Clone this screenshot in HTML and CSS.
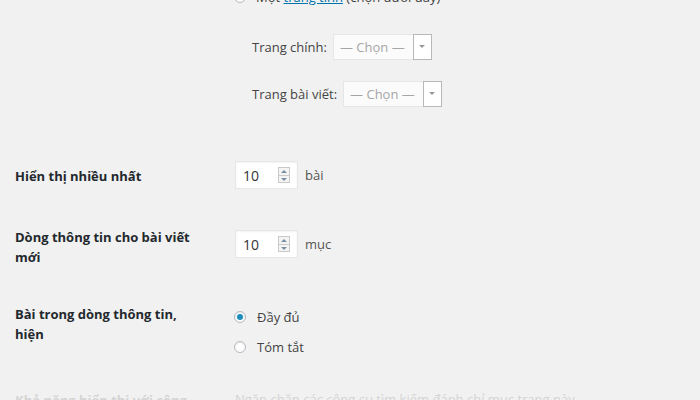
FILE: index.html
```html
<!DOCTYPE html>
<html lang="vi">
<head>
<meta charset="utf-8">
<title>Cài đặt đọc</title>
<link rel="stylesheet" href="styles.css">
</head>
<body>
<div class="page">
  <div class="row row-front">
    <div class="th"></div>
    <div class="td">
      <div class="radio-line top-line"><span class="radio"></span><span>Một <a href="#" class="link">trang tĩnh</a> (chọn dưới đây)</span></div>
      <div class="sub-line first-sub"><span class="sub-label">Trang chính:</span><span class="select"><span class="select-text">— Chọn —</span><span class="select-arrow"></span></span></div>
      <div class="sub-line second-sub"><span class="sub-label">Trang bài viết:</span><span class="select"><span class="select-text">— Chọn —</span><span class="select-arrow"></span></span></div>
    </div>
  </div>

  <div class="row row-b">
    <div class="th th-b">Hiển thị nhiều nhất</div>
    <div class="td td-inline"><span class="num"><span class="num-val">10</span><span class="spin"><span class="up"></span><span class="down"></span></span></span><span class="unit">bài</span></div>
  </div>

  <div class="row row-c">
    <div class="th">Dòng thông tin cho bài viết mới</div>
    <div class="td td-inline td-c"><span class="num"><span class="num-val">10</span><span class="spin"><span class="up"></span><span class="down"></span></span></span><span class="unit">mục</span></div>
  </div>

  <div class="row row-d">
    <div class="th">Bài trong dòng thông tin, hiện</div>
    <div class="td td-d">
      <div class="radio-line"><span class="radio checked"></span><span>Đầy đủ</span></div>
      <div class="radio-line second-radio"><span class="radio"></span><span>Tóm tắt</span></div>
    </div>
  </div>

  <div class="row row-e">
    <div class="th faint">Khả năng hiển thị với công cụ tìm kiếm</div>
    <div class="td faint">Ngăn chặn các công cụ tìm kiếm đánh chỉ mục trang này</div>
  </div>
</div>
</body>
</html>
```

FILE: styles.css
```css
html, body {
  margin: 0;
  padding: 0;
  background: #f1f1f1;
  overflow: hidden;
}
body {
  font-family: "Open Sans", "Noto Sans", sans-serif;
  font-size: 13px;
  color: #444;
  width: 700px;
  height: 400px;
}
.page {
  padding-left: 15px;
}
.row {
  display: flex;
  align-items: flex-start;
}
.th {
  width: 220px;
  flex: none;
  font-weight: 700;
  font-size: 13px;
  line-height: 20px;
  color: #23282d;
  box-sizing: border-box;
  padding-right: 34px;
}
.td {
  flex: 1;
}
.row-front {
  margin-top: -13px;
}
.radio-line {
  display: flex;
  align-items: center;
  height: 20px;
  line-height: 20px;
}
.radio {
  width: 12px;
  height: 12px;
  border: 1px solid #b4b9be;
  border-radius: 50%;
  background: #fff;
  box-shadow: inset 0 1px 2px rgba(0,0,0,0.1);
  margin: 0 10px 0 -1px;
  flex: none;
  position: relative;
  box-sizing: border-box;
}
.radio.checked::after {
  content: "";
  position: absolute;
  left: 2px;
  top: 2px;
  width: 6px;
  height: 6px;
  border-radius: 50%;
  background: #1e8cbe;
}
.link {
  color: #0073aa;
  text-decoration: underline;
}
.sub-line {
  display: flex;
  align-items: center;
  padding-left: 17px;
  height: 26px;
}
.first-sub {
  margin-top: 27px;
}
.second-sub {
  margin-top: 21px;
}
.sub-label {
  margin-right: 6px;
  color: #444;
}
.select {
  display: flex;
  height: 26px;
  border: 1px solid #e6e6e6;
  background: #fbfbfb;
  box-sizing: border-box;
}
.select-text {
  width: 79px;
  padding-left: 6px;
  box-sizing: border-box;
  line-height: 24px;
  color: #a6a6a6;
}
.select-arrow {
  width: 17px;
  margin: -1px -1px -1px 0;
  border: 1px solid #b8b8b8;
  background: #fff;
  position: relative;
}
.select-arrow::after {
  content: "";
  position: absolute;
  left: 5px;
  top: 10px;
  border-left: 3px solid transparent;
  border-right: 3px solid transparent;
  border-top: 3px solid #999;
}
.row-b {
  margin-top: 54px;
}
.th-b {
  padding-top: 5px;
}
.td-inline {
  display: flex;
  align-items: center;
}
.num {
  display: flex;
  align-items: center;
  width: 63px;
  height: 28px;
  background: #fff;
  border: 1px solid #e6e6e6;
  box-sizing: border-box;
  box-shadow: inset 0 1px 2px rgba(0,0,0,0.05);
}
.num-val {
  width: 42px;
  padding-left: 7px;
  box-sizing: border-box;
  color: #333;
  font-size: 14px;
}
.spin {
  width: 12px;
  height: 16px;
  border: 1px solid #c9c9c9;
  background: #f4f4f4;
  box-sizing: border-box;
  display: flex;
  flex-direction: column;
}
.spin .up, .spin .down {
  flex: 1;
  position: relative;
}
.spin .up {
  border-bottom: 1px solid #c9c9c9;
}
.spin .up::after {
  content: "";
  position: absolute;
  left: 2px;
  top: 2px;
  border-left: 3px solid transparent;
  border-right: 3px solid transparent;
  border-bottom: 3px solid #7a8fa6;
}
.spin .down::after {
  content: "";
  position: absolute;
  left: 2px;
  top: 2px;
  border-left: 3px solid transparent;
  border-right: 3px solid transparent;
  border-top: 3px solid #7a8fa6;
}
.unit {
  margin-left: 7px;
  color: #555;
}
.row-c {
  margin-top: 38px;
}
.td-c {
  padding-top: 3px;
}
.row-d {
  margin-top: 37px;
}
.td-d {
  padding-top: 3px;
}
.td-d .radio {
  margin-left: -1px;
  margin-right: 11px;
}
.second-radio {
  margin-top: 10px;
}
.row-e {
  margin-top: 33px;
}
.faint {
  color: #d4d4d4;
}
```
